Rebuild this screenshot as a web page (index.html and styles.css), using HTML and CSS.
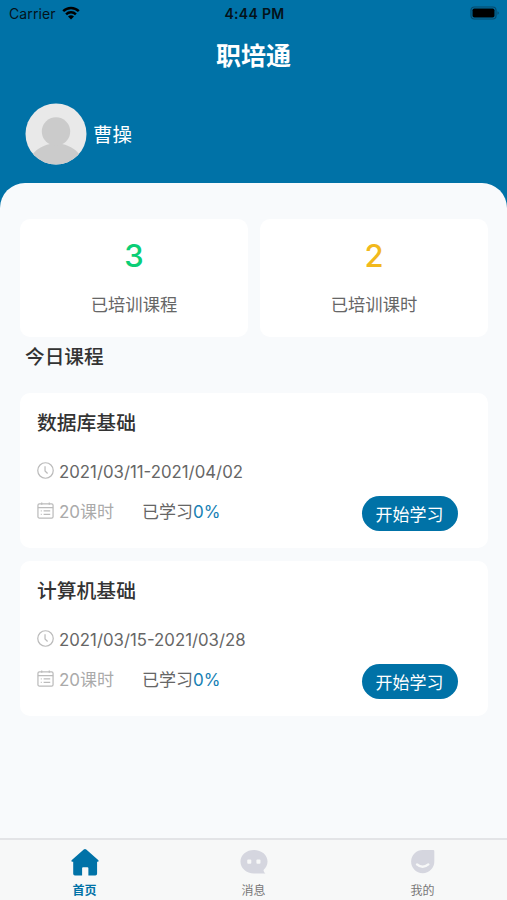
FILE: index.html
```html
<!DOCTYPE html>
<html lang="zh-CN">
<head>
<meta charset="UTF-8">
<meta name="viewport" content="width=device-width, initial-scale=1">
<title>职培通</title>
<link rel="stylesheet" href="styles.css">
</head>
<body>

  <header class="header">
    <div class="status-bar">
      <div class="carrier">
        <span>Carrier</span>
        <svg class="wifi" viewBox="0 0 18 14">
          <path d="M1.2 5.2a11.2 11.2 0 0 1 15.6 0M4.1 8.3a7 7 0 0 1 9.8 0" fill="none" stroke="#000" stroke-width="2.5"/>
          <path d="M9 13.6l-3-3a4.3 4.3 0 0 1 6 0z"/>
        </svg>
      </div>
      <div class="time">4:44 PM</div>
      <svg class="battery" viewBox="0 0 30 14">
        <rect x="1" y="1" width="25" height="12" rx="3.2" fill="none" stroke="#06496b" stroke-width="1.2"/>
        <rect x="2.5" y="2.5" width="22" height="9" rx="1.8"/>
        <path d="M27.5 5.3v3.4q1.3-.5 1.3-1.7t-1.3-1.7z" fill="#06496b"/>
      </svg>
    </div>
    <h1>职培通</h1>
    <div class="user">
      <svg class="avatar" viewBox="0 0 62 62">
        <defs><clipPath id="round"><circle cx="31" cy="31" r="30.5"/></clipPath></defs>
        <g clip-path="url(#round)">
          <rect width="62" height="62" fill="#e9e9e9"/>
          <path d="M25 37h12v4c9 2 15 6 19 13v8H6v-8c4-7 10-11 19-13z" fill="#cbcbcb"/>
          <circle cx="31" cy="28.5" r="14.2" fill="#cbcbcb"/>
        </g>
      </svg>
      <span>曹操</span>
    </div>
  </header>

  <main class="content">
    <div class="stats">
      <div class="stat">
        <div class="num green">3</div>
        <div class="label">已培训课程</div>
      </div>
      <div class="stat">
        <div class="num yellow">2</div>
        <div class="label">已培训课时</div>
      </div>
    </div>

    <h2>今日课程</h2>

    <div class="course">
      <h3>数据库基础</h3>
      <div class="date">
        <svg class="icon" viewBox="0 0 18 18"><circle cx="9" cy="9" r="8.2"/><path d="M8.5 4.5v5l2.7 2.7"/></svg>
        <span>2021/03/11-2021/04/02</span>
      </div>
      <div class="info">
        <svg class="icon" viewBox="0 0 18 18"><rect x="1" y="2" width="16" height="15" rx="1.5"/><path d="M1 6h16M5 .5V3M13 .5V3M4 9.5h1M7 9.5h7M4 13h1M7 13h7"/></svg>
        <span class="hours">20课时</span>
        <span class="progress">已学习<b>0%</b></span>
        <button class="start">开始学习</button>
      </div>
    </div>

    <div class="course">
      <h3>计算机基础</h3>
      <div class="date">
        <svg class="icon" viewBox="0 0 18 18"><circle cx="9" cy="9" r="8.2"/><path d="M8.5 4.5v5l2.7 2.7"/></svg>
        <span>2021/03/15-2021/03/28</span>
      </div>
      <div class="info">
        <svg class="icon" viewBox="0 0 18 18"><rect x="1" y="2" width="16" height="15" rx="1.5"/><path d="M1 6h16M5 .5V3M13 .5V3M4 9.5h1M7 9.5h7M4 13h1M7 13h7"/></svg>
        <span class="hours">20课时</span>
        <span class="progress">已学习<b>0%</b></span>
        <button class="start">开始学习</button>
      </div>
    </div>
  </main>

  <nav class="tabbar">
    <a class="tab active">
      <svg viewBox="0 0 30 30"><path d="M13.7 1.6q1.3-1.1 2.6 0L28.6 12.4q1.4 1.6-.6 1.8H27.5v12.5q0 1.8-1.8 1.8H18.5v-7.5q0-1-1-1h-4.5q-1 0-1 1v7.5H4.6Q2.800 28.500 2.800 26.700V14.200H2q-2-.2-.6-1.800z"/></svg>
      <span>首页</span>
    </a>
    <a class="tab">
      <svg viewBox="0 0 30 30"><path d="M15 2c7.8 0 14 5.2 14 12 0 3.700-1.700 6.500-4.200 8.700.2 1.500.8 2.700 2 3.600H15C7.200 26.300 1 21 1 14S7.200 2 15 2z"/><rect class="hole" x="8" y="12" width="4.2" height="4.2" rx="1"/><rect class="hole" x="17.5" y="12" width="4.2" height="4.2" rx="1"/></svg>
      <span>消息</span>
    </a>
    <a class="tab">
      <svg viewBox="0 0 30 30"><path d="M15 2h10.500q1.300 0 1.200 1.300V14A12 12 0 1 1 15 2z"/><path class="smile" d="M8.800 17q5.700 5 11.700 0"/></svg>
      <span>我的</span>
    </a>
  </nav>

</body>
</html>
```
FILE: styles.css
```css
* {
  box-sizing: border-box;
}
body {
  margin: 0;
  height: 900px;
  display: flex;
  flex-direction: column;
  overflow: hidden;
  background: #0072a7;
  font-family: Inter, "Noto Sans CJK SC", sans-serif;
  color: #333;
}
h1, h2, h3 {
  margin: 0;
  font-weight: 500;
}

/* header */
.header {
  height: 183px;
  color: #fff;
}
.status-bar {
  height: 27px;
  padding: 0 7px 0 9px;
  display: grid;
  grid-template-columns: 1fr auto 1fr;
  align-items: center;
  color: #04121a;
  font-size: 14px;
}
.carrier {
  display: flex;
  align-items: center;
  gap: 6px;
  letter-spacing: 0.1px;
}
.wifi {
  width: 18px;
  height: 14px;
  margin-top: -1px;
}
.time {
  font-weight: 600;
  letter-spacing: 0.3px;
}
.battery {
  width: 30px;
  height: 14px;
  margin-top: -1px;
  justify-self: end;
}
.header h1 {
  height: 57px;
  line-height: 59px;
  text-align: center;
  font-size: 25px;
  font-weight: 700;
}
.user {
  display: flex;
  align-items: center;
  gap: 6px;
  margin-top: 19px;
  padding-left: 25px;
  font-size: 19.5px;
}
.user span {
  margin-top: -2px;
}
.avatar {
  width: 62px;
  height: 62px;
}

/* content */
.content {
  flex: 1;
  padding: 36px 19px 0 20px;
  background: #f8fafc;
  border-radius: 25px 25px 0 0;
}
.stats {
  display: flex;
  gap: 12px;
}
.stat {
  flex: 1;
  height: 118px;
  padding-top: 16px;
  background: #fff;
  border-radius: 10px;
  text-align: center;
}
.num {
  height: 40px;
  line-height: 41px;
  font-size: 31px;
  font-weight: 500;
}
.green {
  color: #0bce76;
}
.yellow {
  color: #f2b91d;
}
.label {
  margin-top: 16px;
  line-height: 28px;
  font-size: 17.3px;
  color: #666;
}
.content h2 {
  height: 39px;
  line-height: 41px;
  margin-bottom: 17px;
  padding-left: 5px;
  font-size: 19.7px;
}
.course {
  height: 155px;
  margin-bottom: 13px;
  padding: 15px 30px 0 17px;
  background: #fff;
  border-radius: 10px;
}
.course h3 {
  line-height: 31px;
  font-size: 19.8px;
}
.date, .info {
  display: flex;
  align-items: center;
  font-size: 17px;
}
.date {
  height: 30px;
  margin-top: 18px;
  font-size: 16.8px;
  color: #666;
}
.info {
  height: 35px;
  margin-top: 9px;
}
.icon {
  width: 17px;
  height: 17px;
  margin: -3px 5px 0 0;
  fill: none;
  stroke: #bbb;
  stroke-width: 1.3;
}
.info .icon {
  margin-top: -7px;
}
.hours, .progress {
  margin-top: -6px;
}
.hours {
  width: 83px;
  color: #aaa;
}
.progress {
  color: #666;
}
.progress b {
  font-weight: 400;
  color: #1680b4;
}
.start {
  width: 96px;
  height: 35px;
  margin-left: auto;
  padding: 0 1px 1px 0;
  border: 0;
  border-radius: 18px;
  background: #0072a7;
  color: #fff;
  font: inherit;
}

/* bottom tabs */
.tabbar {
  height: 62px;
  display: flex;
  background: #f7f8f8;
  border-top: 2px solid #e3e4e7;
}
.tab {
  flex: 1;
  display: flex;
  flex-direction: column;
  align-items: center;
  padding-top: 8px;
  font-size: 12px;
  line-height: 18px;
  color: #777;
}
.tab svg {
  width: 30px;
  height: 30px;
  margin-bottom: 5px;
  fill: #d5d6df;
}
.tab .hole {
  fill: #f7f8f8;
}
.tab .smile {
  fill: none;
  stroke: #f7f8f8;
  stroke-width: 2.5;
  stroke-linecap: round;
}
.tab.active {
  color: #0072a7;
  font-weight: 700;
}
.tab.active svg {
  fill: #0072a7;
}
```
